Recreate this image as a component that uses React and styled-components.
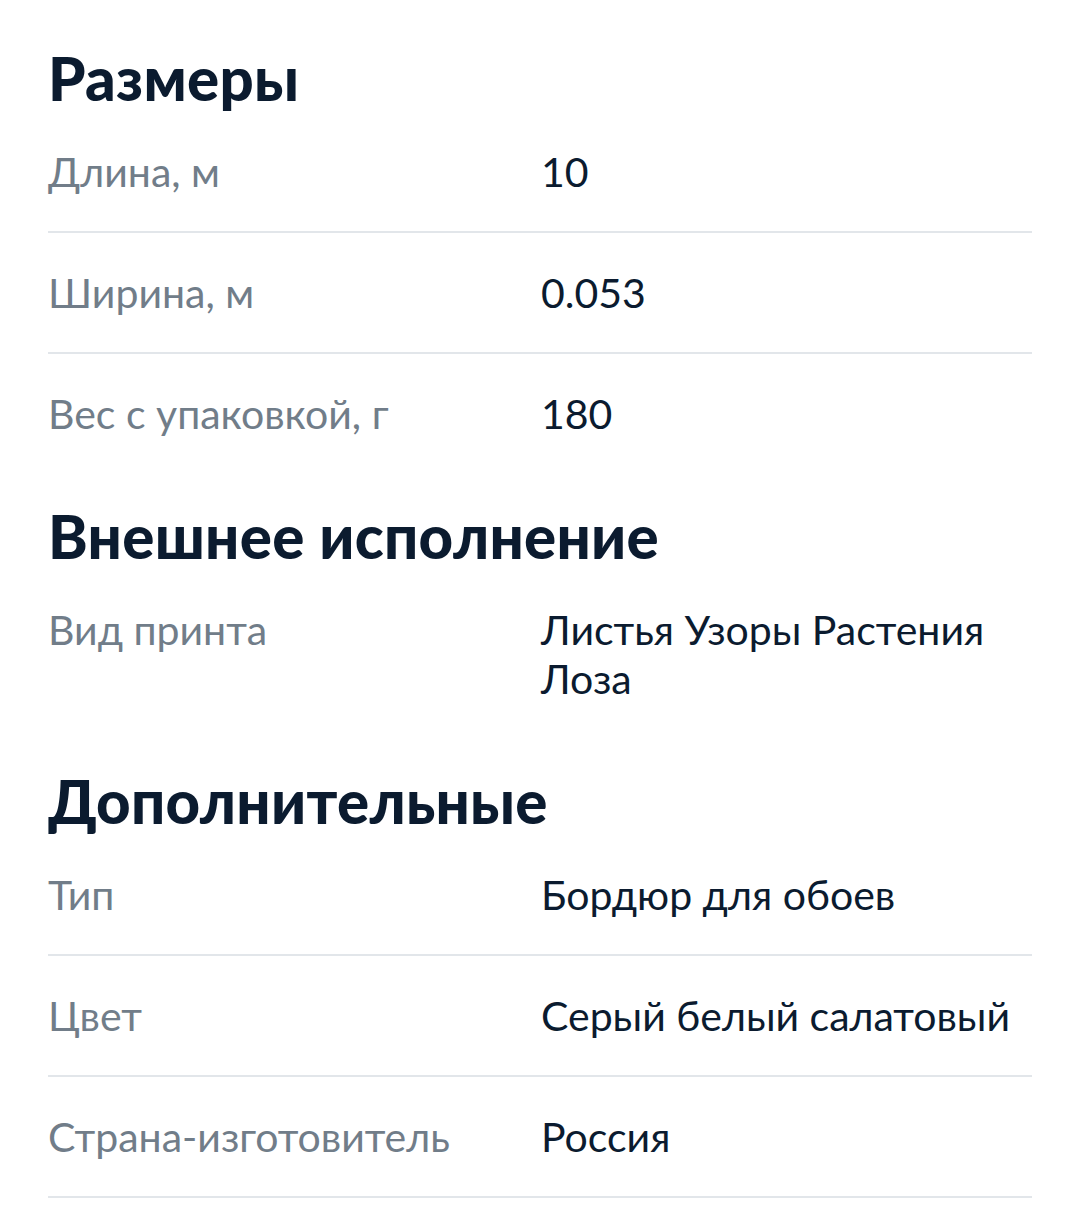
import styled, { createGlobalStyle } from 'styled-components'

const specs = [
  {
    title: 'Размеры',
    rows: [
      { label: 'Длина, м', value: '10', line: true },
      { label: 'Ширина, м', value: '0.053', line: true },
      { label: 'Вес с упаковкой, г', value: '180' }
    ]
  },
  {
    title: 'Внешнее исполнение',
    rows: [
      { label: 'Вид принта', value: 'Листья Узоры Растения Лоза' }
    ]
  },
  {
    title: 'Дополнительные',
    rows: [
      { label: 'Тип', value: 'Бордюр для обоев', line: true },
      { label: 'Цвет', value: 'Серый белый салатовый', line: true },
      { label: 'Страна-изготовитель', value: 'Россия', line: true }
    ]
  }
]

const GlobalStyle = createGlobalStyle`
  body {
    margin: 0;
    background: #ffffff;
    font-family: Lato, "Noto Sans", sans-serif;
    -webkit-font-smoothing: antialiased;
  }
`

const App = () => {
  return (
    <>
      <GlobalStyle />
      <Page>
        {specs.map((section, index) => (
          <Section key={index}>
            <Title>{section.title}</Title>
            {section.rows.map((row, i) => (
              <Row key={i} $line={row.line}>
                <Label>{row.label}</Label>
                <Value>{row.value}</Value>
              </Row>
            ))}
          </Section>
        ))}
      </Page>
    </>
  )
}

const Page = styled.main`
  padding: 17px 48px 0;
  width: 984px;
`

const Section = styled.section`
  display: flex;
  flex-direction: column;
`

const Title = styled.h2`
  margin: 0;
  padding: 31px 0 4px;
  font-size: 60px;
  line-height: 60px;
  font-weight: 900;
  color: #0b1b2f;
  letter-spacing: 0.3px;
`

const Row = styled.div`
  display: grid;
  grid-template-columns: 493px 1fr;
  padding: 35px 0;
  border-bottom: 2px solid ${({ $line }) => ($line ? '#e2e6ea' : 'transparent')};
  font-size: 41px;
  line-height: 49px;
`

const Label = styled.span`
  color: #717d89;
`

const Value = styled.span`
  color: #0b1b2f;
`

export default App
